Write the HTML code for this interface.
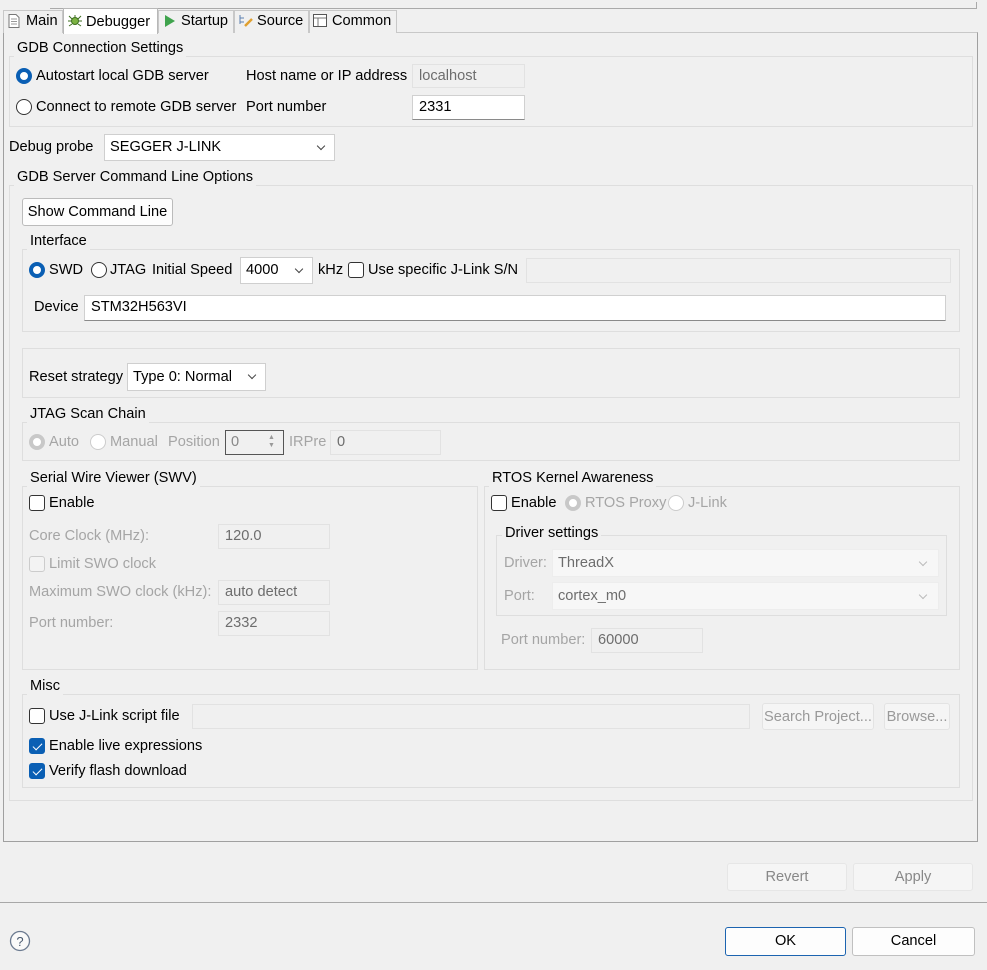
<!DOCTYPE html>
<html><head><meta charset="utf-8"><style>
*{box-sizing:border-box;margin:0;padding:0}
body{width:987px;height:970px;background:#f0f0f0;font-family:"Liberation Sans",sans-serif;font-size:14.6px;color:#000;position:relative;overflow:hidden}
.a{position:absolute;white-space:nowrap}
.t{position:absolute;white-space:nowrap;line-height:18px}
.g{position:absolute;border:1px solid #dedede}
.gt{position:absolute;background:#f0f0f0;padding:0 3px;line-height:18px;white-space:nowrap}
.in{position:absolute;background:#fff;border:1px solid #d0d0d0;border-bottom:1px solid #8a8a8a;line-height:22px;padding-left:6px}
.dis{position:absolute;background:#f0f0f0;border:1px solid #e2e2e2;line-height:22px;padding-left:6px;color:#6d6d6d}
.sel{position:absolute;background:#fff;border:1px solid #cfcfcf;line-height:24px;padding-left:5px}
.sel:after{content:"";position:absolute;right:10px;top:8px;width:5px;height:5px;border-right:1px solid #444;border-bottom:1px solid #444;transform:rotate(45deg)}
.dsel{position:absolute;background:#f7f7f7;border:1px solid #ededed;line-height:26px;padding-left:5px;color:#6d6d6d}
.dsel:after{content:"";position:absolute;right:12px;top:9px;width:5px;height:5px;border-right:1px solid #bbb;border-bottom:1px solid #bbb;transform:rotate(45deg)}
.rad{position:absolute;width:16px;height:16px;border-radius:50%;border:1px solid #333;background:#fff}
.rad.on{background:#fff;border:4.5px solid #0a5fb4}
.rad.d{border-color:#ccc}
.rad.don{border:4.5px solid #c8c8c8}
.cb{position:absolute;width:16px;height:16px;border-radius:3px;border:1px solid #333;background:#fff}
.cb.d{border-color:#ccc;background:#f3f3f3}
.cb.on{background:#0a5fb4;border-color:#0a5fb4}
.cb.on:after{content:"";position:absolute;left:5px;top:2px;width:4px;height:8px;border-right:1.5px solid #fff;border-bottom:1.5px solid #fff;transform:rotate(45deg)}
.gray{color:#a5a5a5}
.btn{position:absolute;background:#fdfdfd;border:1px solid #d0d0d0;border-radius:3px;text-align:center;line-height:26px}
.tab{position:absolute;top:10px;height:23px;border:1px solid #c8c8c8;border-bottom:none;background:#f0f0f0;line-height:21px;padding-left:22px}
</style></head><body>
<div class="a" style="left:50px;top:2px;width:927px;height:7px;border-bottom:1px solid #aaa;border-right:1px solid #aaa"></div>
<div class="a" style="left:3px;top:32px;width:975px;height:810px;border:1px solid #a0a0a0;border-top:1px solid #c8c8c8"></div>
<div class="tab" style="left:3px;width:60px">Main</div>
<svg class="a" style="left:8px;top:14px" width="12" height="14"><path d="M1 .5h7l3 3v10H1z" fill="#fff" stroke="#777"/><path d="M3 5h6M3 7.5h6M3 10h6" stroke="#999"/></svg>
<div class="tab" style="left:63px;top:8px;height:26px;width:95px;background:#fff;border-color:#b8b8b8;line-height:26px">Debugger</div>
<svg class="a" style="left:67px;top:13px" width="16" height="16"><circle cx="8" cy="8" r="3.5" fill="#7cb342" stroke="#3c6e1e"/><path d="M2 3l3 3M14 3l-3 3M1 8h3M12 8h3M2 13l3-2M14 13l-3-2M8 2v2" stroke="#3c6e1e"/></svg>
<div class="tab" style="left:158px;width:76px">Startup</div>
<svg class="a" style="left:164px;top:15px" width="12" height="12"><path d="M1 0l10 6-10 6z" fill="#3fa34d"/></svg>
<div class="tab" style="left:234px;width:75px">Source</div>
<svg class="a" style="left:238px;top:14px" width="16" height="14"><path d="M2 1v9M2 4h4M2 8h4" stroke="#5b7fb0"/><path d="M7 12l7-7" stroke="#e0a030" stroke-width="2.5"/></svg>
<div class="tab" style="left:309px;width:88px">Common</div>
<svg class="a" style="left:313px;top:14px" width="14" height="13"><rect x=".5" y=".5" width="13" height="12" fill="#fff" stroke="#555"/><path d="M1 4h12M5 4v8" stroke="#777"/></svg>
<div class="a" style="left:397px;top:32px;width:580px;border-top:1px solid #c8c8c8"></div>

<div class="g" style="left:9px;top:56px;width:964px;height:71px"></div>
<div class="gt" style="left:14px;top:39px">GDB Connection Settings</div>
<div class="rad on" style="left:16px;top:68px"></div><div class="t" style="left:36px;top:67px">Autostart local GDB server</div>
<div class="rad" style="left:16px;top:99px"></div><div class="t" style="left:36px;top:98px">Connect to remote GDB server</div>
<div class="t" style="left:246px;top:67px">Host name or IP address</div>
<div class="t" style="left:246px;top:98px">Port number</div>
<div class="dis" style="left:412px;top:64px;width:113px;height:24px">localhost</div>
<div class="in" style="left:412px;top:95px;width:113px;height:25px">2331</div>

<div class="t" style="left:9px;top:138px">Debug probe</div>
<div class="sel" style="left:104px;top:134px;width:231px;height:27px">SEGGER J-LINK</div>

<div class="g" style="left:9px;top:185px;width:964px;height:616px"></div>
<div class="gt" style="left:14px;top:168px">GDB Server Command Line Options</div>
<div class="btn" style="left:22px;top:198px;width:151px;height:28px;border-color:#bbb">Show Command Line</div>

<div class="g" style="left:22px;top:249px;width:938px;height:83px"></div>
<div class="gt" style="left:27px;top:232px">Interface</div>
<div class="rad on" style="left:29px;top:262px"></div><div class="t" style="left:49px;top:261px">SWD</div>
<div class="rad" style="left:91px;top:262px"></div><div class="t" style="left:110px;top:261px">JTAG</div>
<div class="t" style="left:152px;top:261px">Initial Speed</div>
<div class="sel" style="left:240px;top:257px;width:73px;height:27px">4000</div>
<div class="t" style="left:318px;top:261px">kHz</div>
<div class="cb" style="left:348px;top:262px"></div><div class="t" style="left:368px;top:261px">Use specific J-Link S/N</div>
<div class="dis" style="left:526px;top:258px;width:425px;height:25px"></div>
<div class="t" style="left:34px;top:298px">Device</div>
<div class="in" style="left:84px;top:295px;width:862px;height:26px">STM32H563VI</div>

<div class="g" style="left:22px;top:348px;width:938px;height:50px"></div>
<div class="t" style="left:29px;top:368px">Reset strategy</div>
<div class="sel" style="left:127px;top:363px;width:139px;height:28px;line-height:26px">Type 0: Normal</div>

<div class="g" style="left:22px;top:422px;width:938px;height:39px"></div>
<div class="gt" style="left:27px;top:405px">JTAG Scan Chain</div>
<div class="rad don" style="left:29px;top:434px"></div><div class="t gray" style="left:49px;top:433px">Auto</div>
<div class="rad d" style="left:90px;top:434px"></div><div class="t gray" style="left:110px;top:433px">Manual</div>
<div class="t gray" style="left:168px;top:433px">Position</div>
<div class="a" style="left:225px;top:430px;width:59px;height:25px;border:1px solid #555;line-height:22px;padding-left:5px;color:#888">0</div>
<div class="a" style="left:268px;top:434px;font-size:7px;color:#999;line-height:8px">▲<br>▼</div>
<div class="t gray" style="left:289px;top:433px">IRPre</div>
<div class="dis" style="left:330px;top:430px;width:111px;height:25px">0</div>

<div class="g" style="left:22px;top:486px;width:456px;height:184px"></div>
<div class="gt" style="left:27px;top:469px">Serial Wire Viewer (SWV)</div>
<div class="cb" style="left:29px;top:495px"></div><div class="t" style="left:49px;top:494px">Enable</div>
<div class="t gray" style="left:29px;top:527px">Core Clock (MHz):</div>
<div class="dis" style="left:218px;top:524px;width:112px;height:25px">120.0</div>
<div class="cb d" style="left:29px;top:556px"></div><div class="t gray" style="left:49px;top:555px">Limit SWO clock</div>
<div class="t gray" style="left:29px;top:583px">Maximum SWO clock (kHz):</div>
<div class="dis" style="left:218px;top:580px;width:112px;height:25px">auto detect</div>
<div class="t gray" style="left:29px;top:614px">Port number:</div>
<div class="dis" style="left:218px;top:611px;width:112px;height:25px">2332</div>

<div class="g" style="left:484px;top:486px;width:476px;height:184px"></div>
<div class="gt" style="left:489px;top:469px">RTOS Kernel Awareness</div>
<div class="cb" style="left:491px;top:495px"></div><div class="t" style="left:511px;top:494px">Enable</div>
<div class="rad don" style="left:565px;top:495px"></div><div class="t gray" style="left:585px;top:494px">RTOS Proxy</div>
<div class="rad d" style="left:668px;top:495px"></div><div class="t gray" style="left:688px;top:494px">J-Link</div>
<div class="g" style="left:496px;top:535px;width:451px;height:81px"></div>
<div class="gt" style="left:502px;top:524px">Driver settings</div>
<div class="t gray" style="left:504px;top:554px">Driver:</div>
<div class="dsel" style="left:552px;top:549px;width:387px;height:28px">ThreadX</div>
<div class="t gray" style="left:504px;top:587px">Port:</div>
<div class="dsel" style="left:552px;top:582px;width:387px;height:28px">cortex_m0</div>
<div class="t gray" style="left:501px;top:631px">Port number:</div>
<div class="dis" style="left:591px;top:628px;width:112px;height:25px">60000</div>

<div class="g" style="left:22px;top:694px;width:938px;height:94px"></div>
<div class="gt" style="left:27px;top:677px">Misc</div>
<div class="cb" style="left:29px;top:708px"></div><div class="t" style="left:49px;top:707px">Use J-Link script file</div>
<div class="dis" style="left:192px;top:704px;width:558px;height:25px"></div>
<div class="btn" style="left:762px;top:703px;width:112px;height:27px;color:#999;background:#f5f5f5;border-color:#e3e3e3">Search Project...</div>
<div class="btn" style="left:884px;top:703px;width:66px;height:27px;color:#999;background:#f5f5f5;border-color:#e3e3e3">Browse...</div>
<div class="cb on" style="left:29px;top:738px"></div><div class="t" style="left:49px;top:737px">Enable live expressions</div>
<div class="cb on" style="left:29px;top:763px"></div><div class="t" style="left:49px;top:762px">Verify flash download</div>

<div class="btn" style="left:727px;top:863px;width:120px;height:28px;color:#888;background:#f5f5f5;border-color:#e6e6e6">Revert</div>
<div class="btn" style="left:853px;top:863px;width:120px;height:28px;color:#888;background:#f5f5f5;border-color:#e6e6e6">Apply</div>
<div class="a" style="left:0;top:902px;width:987px;border-top:1px solid #a8a8a8"></div>
<svg class="a" style="left:9px;top:930px" width="22" height="22"><circle cx="11" cy="11" r="9.5" fill="#fafafa" stroke="#6b7a90" stroke-width="1.3"/><text x="11" y="16" text-anchor="middle" font-family="Liberation Sans" font-size="13" fill="#4a5a70">?</text></svg>
<div class="btn" style="left:725px;top:927px;width:121px;height:29px;border-color:#1c64b0;line-height:27px">OK</div>
<div class="btn" style="left:852px;top:927px;width:123px;height:29px;border-color:#c0c0c0;line-height:27px">Cancel</div>
</body></html>
